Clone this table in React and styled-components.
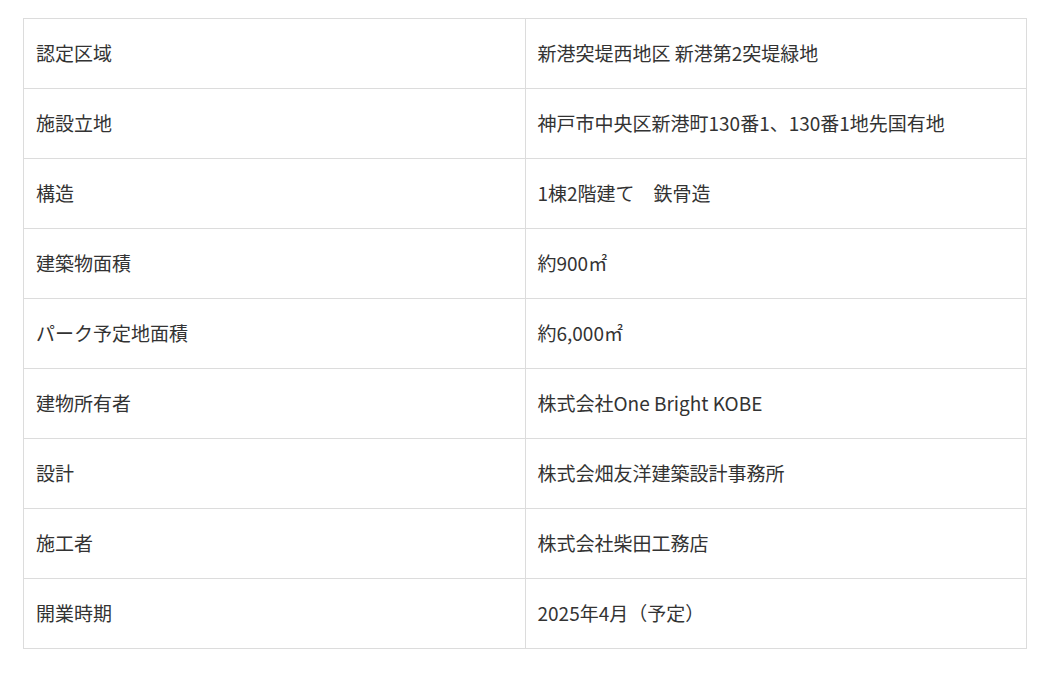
import styled, { createGlobalStyle } from "styled-components";

const GlobalStyle = createGlobalStyle`
  html, body {
    margin: 0;
    padding: 0;
    background: #fff;
  }
  body {
    font-family: "Noto Sans CJK JP", "Noto Sans", sans-serif;
    color: #333;
  }
`;

const Page = styled.div`
  padding: 18px 31px 0 23px;
`;

const SpecTable = styled.table`
  width: 100%;
  border-collapse: collapse;
  table-layout: fixed;
  border: 1px solid #dcdcdc;
`;

const Row = styled.tr`
  height: 70px;
  border-bottom: 1px solid #dcdcdc;
`;

const Cell = styled.td`
  padding: 0 12px;
  font-size: 19px;
  line-height: 1.4;
  vertical-align: middle;
  color: #333;
  border-left: ${(p) => (p.$value ? "1px solid #dcdcdc" : "none")};
  white-space: pre;
`;

const rows = [
  ["認定区域", "新港突堤西地区 新港第2突堤緑地"],
  ["施設立地", "神戸市中央区新港町130番1、130番1地先国有地"],
  ["構造", "1棟2階建て　鉄骨造"],
  ["建築物面積", "約900㎡"],
  ["パーク予定地面積", "約6,000㎡"],
  ["建物所有者", "株式会社One Bright KOBE"],
  ["設計", "株式会畑友洋建築設計事務所"],
  ["施工者", "株式会社柴田工務店"],
  ["開業時期", "2025年4月（予定）"],
];

export default function App() {
  return (
    <>
      <GlobalStyle />
      <Page>
        <SpecTable>
          <tbody>
            {rows.map(([label, value]) => (
              <Row key={label}>
                <Cell>{label}</Cell>
                <Cell $value>{value}</Cell>
              </Row>
            ))}
          </tbody>
        </SpecTable>
      </Page>
    </>
  );
}
